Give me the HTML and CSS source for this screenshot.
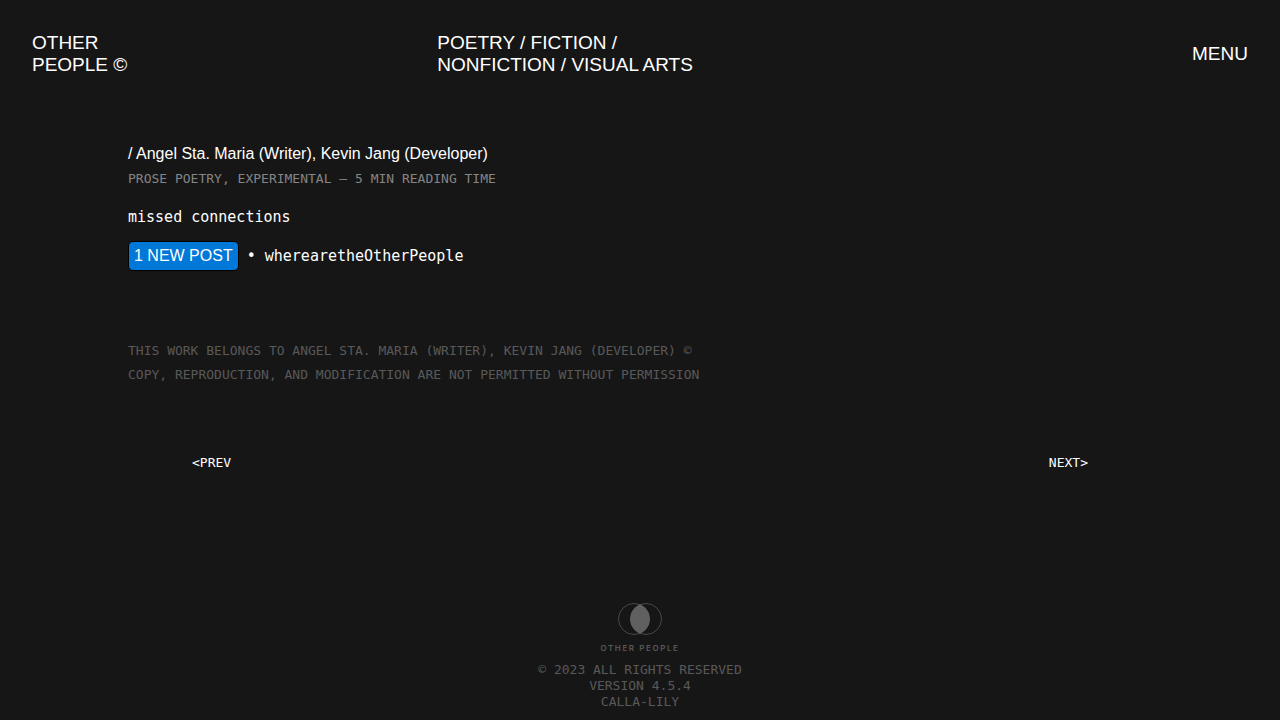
FILE: index.html
```html
<!DOCTYPE html>
<html lang="en">
<head>
<meta charset="utf-8">
<meta name="viewport" content="width=device-width, initial-scale=1">
<title>missed connections – Other People</title>
<link rel="stylesheet" href="styles.css">
</head>
<body>
<header class="site-header">
  <a class="brand" href="#">OTHER<br>PEOPLE ©</a>
  <a class="sections" href="#">POETRY / FICTION /<br>NONFICTION / VISUAL ARTS</a>
  <button class="menu" type="button">MENU</button>
</header>
<main class="work">
  <h1 class="authors">/ Angel Sta. Maria (Writer), Kevin Jang (Developer)</h1>
  <p class="meta">PROSE POETRY, EXPERIMENTAL — 5 MIN READING TIME</p>
  <p class="title">missed connections</p>
  <div class="post">
    <button class="new-post" type="button">1 NEW POST</button>
    <span class="handle">• wherearetheOtherPeople</span>
  </div>
  <p class="rights">THIS WORK BELONGS TO ANGEL STA. MARIA (WRITER), KEVIN JANG (DEVELOPER) ©<br>COPY, REPRODUCTION, AND MODIFICATION ARE NOT PERMITTED WITHOUT PERMISSION</p>
</main>
<nav class="pager">
  <a href="#">&lt;PREV</a>
  <a href="#">NEXT&gt;</a>
</nav>
<footer class="site-footer">
  <svg class="logo" width="44" height="32" viewBox="0 0 44 32" aria-hidden="true">
    <circle class="logo-ring" cx="16" cy="16" r="15.5"/>
    <circle class="logo-ring" cx="28" cy="16" r="15.5"/>
    <path class="logo-lens" d="M22 1.2C15 5 12.2 10 12.2 16S15 27 22 30.8C29 27 31.8 22 31.8 16S29 5 22 1.2Z"/>
  </svg>
  <p class="wordmark">OTHER PEOPLE</p>
  <p class="legal">© 2023 ALL RIGHTS RESERVED<br>VERSION 4.5.4<br>CALLA-LILY</p>
</footer>
</body>
</html>
```
FILE: styles.css
```css
* {
  box-sizing: border-box;
}

body {
  margin: 0;
  background: #161616;
  color: #fff;
  font-family: "Liberation Sans", Arial, sans-serif;
}

a {
  color: inherit;
  text-decoration: none;
}

h1,
p {
  margin: 0;
  font-weight: 400;
}

button {
  font-family: inherit;
  color: inherit;
  cursor: pointer;
}

.site-header {
  display: grid;
  grid-template-columns: repeat(3, 1fr);
  align-items: center;
  padding: 32px;
  font-size: 19px;
  line-height: 22px;
}

.brand,
.sections {
  justify-self: start;
}

.menu {
  justify-self: end;
  padding: 0;
  border: 0;
  background: none;
  font-size: 19px;
  line-height: 22px;
}

.work {
  padding: 36px 10% 0;
}

.authors {
  font-size: 16px;
  line-height: 20px;
}

.meta,
.rights,
.pager,
.legal {
  font-family: "DejaVu Sans Mono", monospace;
  font-size: 13px;
}

.meta {
  margin-top: 7px;
  color: #858585;
  line-height: 16px;
}

.title,
.handle {
  font-family: "DejaVu Sans Mono", monospace;
  font-size: 15px;
  line-height: 20px;
}

.title {
  margin-top: 20px;
}

.post {
  display: flex;
  align-items: center;
  gap: 8px;
  margin-top: 14px;
}

.new-post {
  padding: 4px 5px;
  border: 1px solid #000;
  border-radius: 5px;
  background: #0078d7;
  font-size: 16px;
  line-height: 20px;
}

.rights {
  margin-top: 68px;
  color: #595959;
  line-height: 24px;
}

.pager {
  display: flex;
  justify-content: space-between;
  padding: 68px 15% 0;
  line-height: 16px;
}

.site-footer {
  display: flex;
  flex-direction: column;
  align-items: center;
  padding: 132px 32px 10px;
  color: #595959;
  text-align: center;
}

.logo-ring {
  fill: none;
  stroke: #484848;
}

.logo-lens {
  fill: #606060;
}

.wordmark {
  margin-top: 8px;
  font-family: Inter, sans-serif;
  font-size: 8px;
  font-weight: 600;
  letter-spacing: 0.2em;
  line-height: 10px;
}

.legal {
  margin-top: 9px;
  line-height: 16px;
}
```
